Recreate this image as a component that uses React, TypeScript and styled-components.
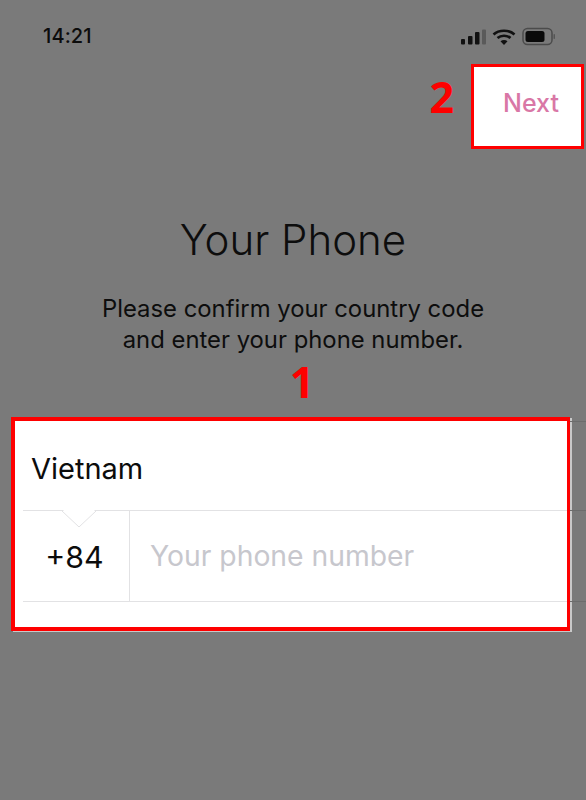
import React from "react";
import styled, { createGlobalStyle } from "styled-components";

const Global = createGlobalStyle`
  html, body { margin: 0; padding: 0; background: #7a7a7a; }
  #root { width: 586px; height: 800px; overflow: hidden; }
`;

const Screen = styled.div`
  width: 586px;
  height: 800px;
  background: #7a7a7a;
  display: flex;
  flex-direction: column;
  font-family: Inter, "Liberation Sans", sans-serif;
  color: #0c0c0c;
  overflow: hidden;
`;

const StatusBar = styled.div`
  height: 64px;
  box-sizing: border-box;
  padding: 22px 26px 0 43px;
  display: flex;
  justify-content: space-between;
  align-items: flex-start;
`;

const Time = styled.span`
  font-size: 20px;
  line-height: 28px;
  font-weight: 500;
  letter-spacing: 0.1px;
  color: #0c0c0c;
`;

const StatusIcons = styled.div`
  display: flex;
  align-items: center;
  margin-top: 4px;
`;

const Header = styled.div`
  display: flex;
  justify-content: flex-end;
  align-items: center;
  gap: 17px;
  padding-right: 2px;
`;

const Step = styled.span`
  font-family: "Open Sans", "Liberation Sans", sans-serif;
  font-weight: 700;
  font-size: 43px;
  line-height: 50px;
  color: #fe0000;
`;

const HeaderStep = styled(Step)`
  margin-bottom: 20px;
`;

const NextBox = styled.div`
  width: 113px;
  height: 85px;
  box-sizing: border-box;
  border: 3px solid #fe0000;
  background: #fff;
  display: flex;
  align-items: center;
  justify-content: flex-end;
  padding: 0 22px 8px 0;
  font-size: 25px;
  font-weight: 500;
  color: #d977a6;
`;

const Title = styled.h1`
  margin: 64px 0 0;
  font-size: 42px;
  line-height: 54px;
  font-weight: 300;
  text-align: center;
  color: #0d0d0d;
`;

const Subtitle = styled.p`
  margin: 26px 0 0;
  font-size: 23.85px;
  line-height: 31px;
  font-weight: 400;
  text-align: center;
  color: #0d0d0d;
`;

const CenterStep = styled(Step)`
  display: block;
  text-align: center;
  margin-top: 2px;
  margin-left: 18px;
`;

const FormRow = styled.div`
  display: flex;
  margin-top: 10px;
  padding-left: 11px;
`;

const Highlight = styled.div`
  width: 559px;
  height: 214px;
  box-sizing: border-box;
  border: 4px solid #fe0000;
  border-right-width: 3px;
  background: #fff;
  padding-left: 8px;
  display: flex;
  flex-direction: column;
  box-shadow: 2px 1px 0 #c9c9c9;
`;

const CountryRow = styled.div`
  height: 90px;
  box-sizing: border-box;
  padding: 5px 0 0 8px;
  border-bottom: 1px solid #e2e2e4;
  display: flex;
  align-items: center;
  font-size: 29px;
  position: relative;
`;

const Notch = styled.svg`
  position: absolute;
  left: 39px;
  bottom: -18px;
`;

const PhoneRow = styled.div`
  height: 91px;
  box-sizing: border-box;
  border-bottom: 1px solid #e2e2e4;
  display: flex;
  align-items: stretch;
`;

const Code = styled.div`
  width: 107px;
  box-sizing: border-box;
  padding: 2px 3px 0 0;
  border-right: 1px solid #e2e2e4;
  display: flex;
  align-items: center;
  justify-content: center;
  font-size: 30.3px;
`;

const Placeholder = styled.div`
  display: flex;
  align-items: center;
  padding-left: 20px;
  font-size: 28.3px;
  font-weight: 400;
  color: #c7c7cd;
`;

const Overflow = styled.div`
  flex: 1;
  display: flex;
  flex-direction: column;
`;

const OverflowLine = styled.div<{ $top: number }>`
  height: 1px;
  background: #6c6c6c;
  margin-top: ${(p) => p.$top}px;
`;

export default function App() {
  return (
    <Screen>
      <Global />
      <StatusBar>
        <Time>14:21</Time>
        <StatusIcons>
          <svg width="100" height="22" viewBox="0 0 100 22">
            <g fill="#111">
              <rect x="1" y="13" width="4" height="5.5" rx="1" />
              <rect x="8" y="10" width="4.5" height="8.5" rx="1" />
              <rect x="15" y="6" width="4.5" height="12.5" rx="1" />
            </g>
            <rect x="22" y="3.5" width="4" height="15" rx="1" fill="#5a5a5a" />
            <g fill="none" stroke="#111" strokeWidth="2.6" strokeLinecap="butt">
              <path d="M33.5 8.5 C39 3.5 49 3.5 54.5 8.5" />
              <path d="M37.5 12 C41 9 47 9 50.5 12" />
            </g>
            <path d="M40.5 15.2 C42.5 13.6 45.5 13.6 47.5 15.2 L44 19 Z" fill="#111" />
            <rect x="63" y="2.5" width="29" height="16" rx="4.5" fill="none" stroke="#4b4b4b" strokeWidth="1.5" />
            <rect x="65.5" y="5" width="19" height="11" rx="2.5" fill="#0a0a0a" />
            <rect x="93.5" y="8" width="1.5" height="5" rx="0.7" fill="#555" />
          </svg>
        </StatusIcons>
      </StatusBar>
      <Header>
        <HeaderStep>2</HeaderStep>
        <NextBox>Next</NextBox>
      </Header>
      <Title>Your Phone</Title>
      <Subtitle>
        Please confirm your country code
        <br />
        and enter your phone number.
      </Subtitle>
      <CenterStep>1</CenterStep>
      <FormRow>
        <Highlight>
          <CountryRow>
            Vietnam
            <Notch width="34" height="18" viewBox="0 0 34 18">
              <path d="M0 1 L17 17 L34 1" fill="#fff" stroke="#e2e2e4" strokeWidth="1" />
              <path d="M1.5 1 H32.5" stroke="#fff" strokeWidth="2" />
            </Notch>
          </CountryRow>
          <PhoneRow>
            <Code>+84</Code>
            <Placeholder>Your phone number</Placeholder>
          </PhoneRow>
        </Highlight>
        <Overflow>
          <OverflowLine $top={4} />
          <OverflowLine $top={88} />
          <OverflowLine $top={90} />
        </Overflow>
      </FormRow>
    </Screen>
  );
}
